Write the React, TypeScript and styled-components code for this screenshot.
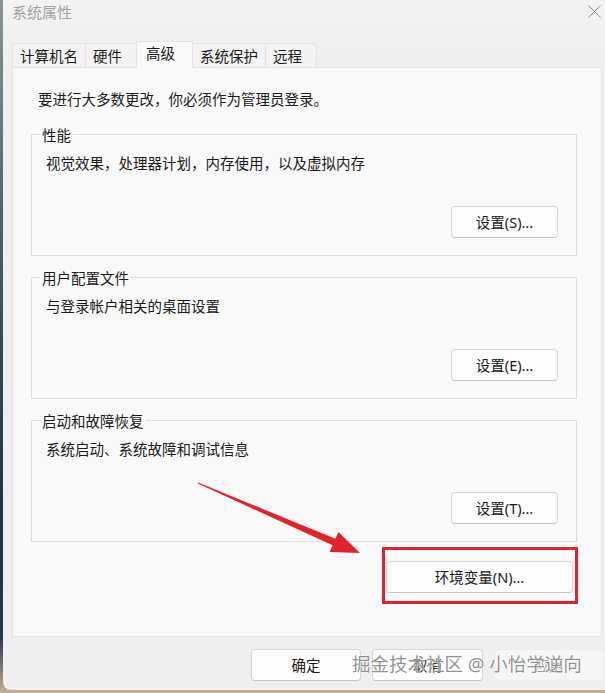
import React from "react";
import styled, { createGlobalStyle } from "styled-components";

const Global = createGlobalStyle`
  html, body { margin: 0; padding: 0; }
  body {
    background: #f0f0f0;
    font-family: "Noto Sans", "Noto Sans CJK SC", sans-serif;
  }
`;

const FONT = `"Noto Sans", "Noto Sans CJK SC", sans-serif`;

const Screen = styled.div`
  position: relative;
  width: 605px;
  height: 693px;
  overflow: hidden;
  display: flex;
  background: linear-gradient(180deg, #8a959a 0%, #51666a 30%, #2e4d4f 50%, #1f3347 75%, #2a3550 92%, #c9b08f 100%);
`;

const Dialog = styled.div`
  margin-left: 3px;
  width: 602px;
  height: 690px;
  background: linear-gradient(180deg, #f3f3f3 0px, #efefef 60px, #efefef 100%);
  border-bottom-left-radius: 8px;
  display: flex;
  flex-direction: column;
  font-family: ${FONT};
  color: #1a1a1a;
`;

const TitleBar = styled.div`
  height: 24px;
  display: flex;
  align-items: center;
  justify-content: space-between;
  padding-left: 9px;
  padding-right: 4px;
`;

const Title = styled.span`
  font-size: 15px;
  line-height: 24px;
  color: #a2a2a2;
`;

const CloseIcon = styled.svg`
  width: 13px;
  height: 13px;
  margin-top: -1px;
`;

const TabRow = styled.div`
  margin-top: 17px;
  margin-bottom: -1px;
  padding-left: 10px;
  height: 27px;
  display: flex;
  align-items: flex-end;
  position: relative;
  z-index: 1;
`;

const Tab = styled.div<{ $active?: boolean }>`
  box-sizing: border-box;
  height: ${(p) => (p.$active ? "27px" : "25px")};
  min-width: ${(p) => (p.$active ? "57px" : "52px")};
  padding: ${(p) => (p.$active ? "0 9px" : "0 7px")};
  font-size: 14.5px;
  line-height: ${(p) => (p.$active ? "23px" : "24px")};
  border: 1px solid #e3e3e3;
  border-bottom: ${(p) => (p.$active ? "none" : "1px solid #e3e3e3")};
  margin-left: -1px;
  background: ${(p) => (p.$active ? "#f9f9f9" : "#f3f3f3")};
  color: #1a1a1a;
  white-space: nowrap;
  position: relative;
  z-index: ${(p) => (p.$active ? 2 : 1)};
`;

const Panel = styled.div`
  box-sizing: border-box;
  margin-left: 9px;
  width: 590px;
  height: 570px;
  border: 1px solid #e2e2e2;
  background: #f9f9f9;
  padding: 22px 24px 0 18px;
  display: flex;
  flex-direction: column;
`;

const Intro = styled.div`
  font-size: 14.5px;
  line-height: 18px;
  padding-left: 7px;
`;

const Group = styled.div<{ $first?: boolean }>`
  box-sizing: border-box;
  height: 122px;
  margin-top: ${(p) => (p.$first ? "26px" : "21px")};
  border: 1px solid #dcdcdc;
  padding: 0 18px 17px 14px;
  display: flex;
  flex-direction: column;
`;

const GroupLabel = styled.div`
  align-self: flex-start;
  margin-top: -9px;
  margin-left: -6px;
  padding: 0 2px;
  background: #f9f9f9;
  font-size: 14.5px;
  line-height: 18px;
`;

const GroupText = styled.div`
  margin-top: 10px;
  font-size: 14.5px;
  line-height: 18px;
`;

const Button = styled.button<{ $w?: number; $disabled?: boolean }>`
  box-sizing: border-box;
  width: ${(p) => p.$w ?? 107}px;
  height: 32px;
  border-radius: 4px;
  border: 1px solid ${(p) => (p.$disabled ? "#ececec" : "#d6d6d6")};
  border-bottom-color: ${(p) => (p.$disabled ? "#ececec" : "#c4c4c4")};
  background: ${(p) => (p.$disabled ? "#f6f6f6" : "#fdfdfd")};
  color: ${(p) => (p.$disabled ? "#a0a0a0" : "#1a1a1a")};
  font-family: ${FONT};
  font-size: 14.5px;
  line-height: 20px;
  padding: 0;
  cursor: default;
`;

const GroupButton = styled(Button)`
  margin-top: auto;
  align-self: flex-end;
`;

const EnvRow = styled.div`
  margin-top: 19px;
  margin-right: 4px;
  align-self: flex-end;
  position: relative;
`;

const Highlight = styled.div`
  position: absolute;
  top: -14px;
  left: -4px;
  right: -5px;
  bottom: -11px;
  border: 3px solid #e0222c;
  pointer-events: none;
`;

const Footer = styled.div`
  margin-top: 12px;
  display: flex;
  justify-content: flex-end;
  gap: 11px;
  padding-right: 1px;
`;

const ArrowLayer = styled.svg`
  position: absolute;
  left: 0;
  top: 0;
  width: 605px;
  height: 693px;
  pointer-events: none;
`;

const Watermark = styled.div`
  position: absolute;
  left: 352px;
  top: 652px;
  font-family: ${FONT};
  font-size: 18.5px;
  line-height: 24px;
  color: rgba(125, 125, 125, 0.85);
  white-space: nowrap;
  text-shadow: 0 0 2px #fff, 0 0 1px #fff;
  pointer-events: none;
`;

const groups = [
  { label: "性能", text: "视觉效果，处理器计划，内存使用，以及虚拟内存", button: "设置(S)..." },
  { label: "用户配置文件", text: "与登录帐户相关的桌面设置", button: "设置(E)..." },
  { label: "启动和故障恢复", text: "系统启动、系统故障和调试信息", button: "设置(T)..." },
];

const tabs = ["计算机名", "硬件", "高级", "系统保护", "远程"];

export default function App() {
  return (
    <Screen>
      <Global />
      <Dialog>
        <TitleBar>
          <Title>系统属性</Title>
          <CloseIcon viewBox="0 0 13 13">
            <path d="M0.5 0.5 L12.5 12.5 M12.5 0.5 L0.5 12.5" stroke="#8c8c8c" strokeWidth="1" fill="none" />
          </CloseIcon>
        </TitleBar>
        <TabRow>
          {tabs.map((t) => (
            <Tab key={t} $active={t === "高级"}>
              {t}
            </Tab>
          ))}
        </TabRow>
        <Panel>
          <Intro>要进行大多数更改，你必须作为管理员登录。</Intro>
          {groups.map((g, i) => (
            <Group key={g.label} $first={i === 0}>
              <GroupLabel>{g.label}</GroupLabel>
              <GroupText>{g.text}</GroupText>
              <GroupButton>{g.button}</GroupButton>
            </Group>
          ))}
          <EnvRow>
            <Button $w={187}>环境变量(N)...</Button>
            <Highlight />
          </EnvRow>
        </Panel>
        <Footer>
          <Button $w={110}>确定</Button>
          <Button $w={111}>取消</Button>
          <Button $w={110} $disabled>
            应用
          </Button>
        </Footer>
      </Dialog>
      <ArrowLayer viewBox="0 0 605 693">
        <polygon
          points="198.2,482.4 335.4,538.8 338.4,531.9 360,553 329.6,552.1 332.6,545.2 197.8,483.6"
          fill="#e0242b"
        />
      </ArrowLayer>
      <Watermark>掘金技术社区 @ 小怡学逆向</Watermark>
    </Screen>
  );
}
